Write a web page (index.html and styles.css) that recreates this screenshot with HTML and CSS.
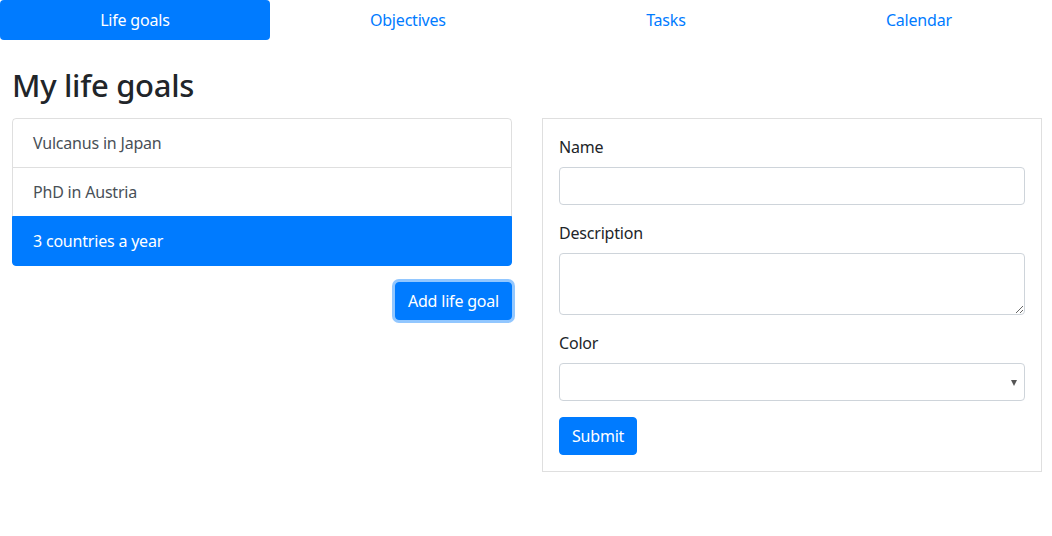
FILE: index.html
```html
<!DOCTYPE html>
<html lang="en">
<head>
<meta charset="utf-8">
<title>My life goals</title>
<link rel="stylesheet" href="styles.css">
</head>
<body>
<nav class="nav">
  <a class="nav-link active" href="#">Life goals</a>
  <a class="nav-link" href="#">Objectives</a>
  <a class="nav-link" href="#">Tasks</a>
  <a class="nav-link" href="#">Calendar</a>
</nav>
<main class="page">
  <h2 class="title">My life goals</h2>
  <div class="columns">
    <section class="left">
      <div class="list">
        <a class="list-item" href="#">Vulcanus in Japan</a>
        <a class="list-item" href="#">PhD in Austria</a>
        <a class="list-item active" href="#">3 countries a year</a>
      </div>
      <div class="actions">
        <button class="btn btn-focus" type="button">Add life goal</button>
      </div>
    </section>
    <section class="card">
      <form class="form">
        <div class="group">
          <label class="label" for="name">Name</label>
          <input class="control" id="name" type="text">
        </div>
        <div class="group">
          <label class="label" for="desc">Description</label>
          <textarea class="control area" id="desc" rows="2"></textarea>
        </div>
        <div class="group">
          <label class="label" for="color">Color</label>
          <div class="select-wrap">
            <select class="control select" id="color"><option></option></select>
            <span class="caret"></span>
          </div>
        </div>
        <button class="btn" type="button">Submit</button>
      </form>
    </section>
  </div>
</main>
</body>
</html>
```
FILE: styles.css
```css
* { box-sizing: border-box; }
html, body { margin: 0; padding: 0; background: #fff; }
body {
  font-family: "Noto Sans", "Open Sans", sans-serif;
  font-size: 16px;
  line-height: 24px;
  letter-spacing: -0.2px;
  color: #212529;
}
.nav { display: flex; }
.nav-link {
  flex: 1 1 auto;
  text-align: center;
  padding: 8px 16px;
  color: #007bff;
  text-decoration: none;
  border-radius: 4px;
}
.nav-link.active { background: #007bff; color: #fff; }
.page { padding: 0 10px 0 12px; }
.title {
  margin: 26px 0 14px;
  font-size: 31px;
  font-weight: 500;
  line-height: 38px;
  letter-spacing: -0.3px;
}
.columns { display: flex; gap: 30px; align-items: flex-start; }
.left { width: 500px; }
.list { display: flex; flex-direction: column; }
.list-item {
  padding: 12px 20px;
  color: #495057;
  text-decoration: none;
  border: 1px solid rgba(0,0,0,.125);
  border-top-width: 0;
}
.list-item:first-child { border-top-width: 1px; border-radius: 4px 4px 0 0; }
.list-item:last-child { border-radius: 0 0 4px 4px; }
.list-item.active {
  background: #007bff;
  border-color: #007bff;
  color: #fff;
  margin-top: -1px;
  border-top-width: 1px;
}
.actions { display: flex; justify-content: flex-end; margin-top: 16px; }
.btn {
  font: inherit;
  letter-spacing: inherit;
  color: #fff;
  background: #007bff;
  border: 1px solid #007bff;
  border-radius: 4px;
  padding: 6px 12px;
  line-height: 24px;
  cursor: pointer;
}
.btn-focus { box-shadow: 0 0 0 3px rgba(38,143,255,.5); }
.card {
  width: 500px;
  border: 1px solid rgba(0,0,0,.125);
  padding: 16px;
}
.group { margin-bottom: 16px; }
.label { display: block; margin-bottom: 8px; }
.control {
  display: block;
  width: 100%;
  height: 38px;
  padding: 6px 12px;
  font: inherit;
  line-height: 24px;
  color: #495057;
  background: #fff;
  border: 1px solid #ced4da;
  border-radius: 4px;
}
.area { height: 62px; resize: vertical; }
.select-wrap { position: relative; }
.select { appearance: none; -webkit-appearance: none; }
.caret {
  position: absolute;
  right: 8px;
  top: 17px;
  width: 0;
  height: 0;
  border-left: 3.5px solid transparent;
  border-right: 3.5px solid transparent;
  border-top: 6px solid #555;
  pointer-events: none;
}
```
